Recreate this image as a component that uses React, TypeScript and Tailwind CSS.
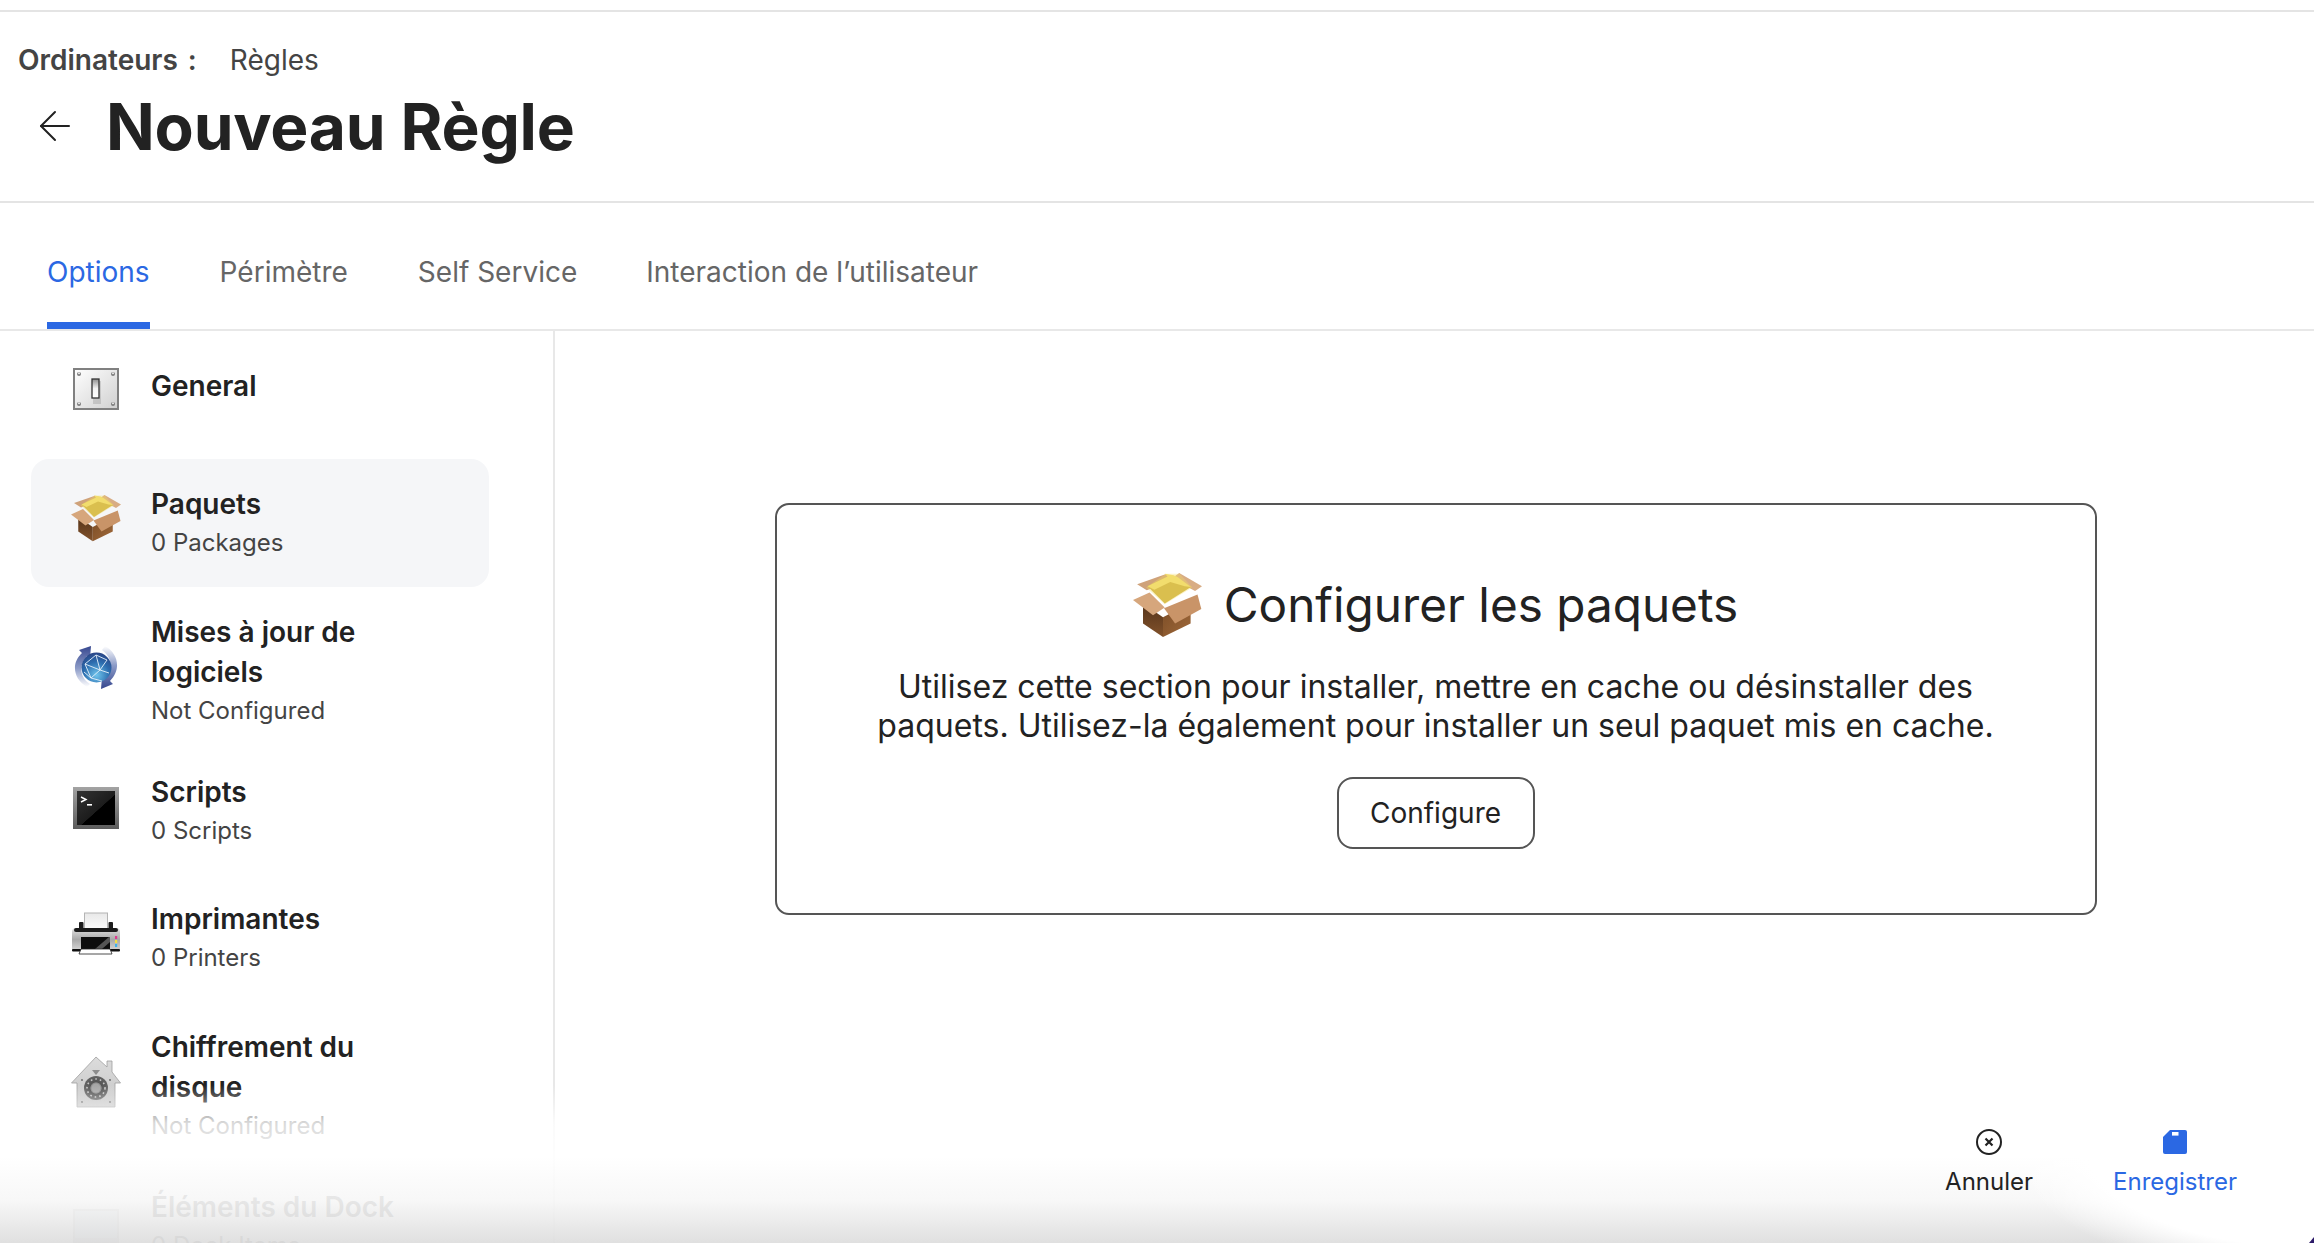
import React from "react";
import { ArrowLeft } from "lucide-react";

function SwitchIcon() {
  return (
    <svg viewBox="0 0 48 48" className="w-12 h-12">
      <defs>
        <linearGradient id="plate" x1="0" y1="0" x2="1" y2="1">
          <stop offset="0" stopColor="#ffffff" />
          <stop offset="1" stopColor="#d0d0d0" />
        </linearGradient>
        <linearGradient id="tog" x1="0" y1="0" x2="0" y2="1">
          <stop offset="0" stopColor="#8f8f8f" />
          <stop offset="0.5" stopColor="#f4f4f4" />
          <stop offset="1" stopColor="#ffffff" />
        </linearGradient>
      </defs>
      <rect x="2" y="3" width="44" height="40" fill="url(#plate)" stroke="#808080" strokeWidth="2" />
      <rect x="21" y="15" width="8" height="23" fill="#000" opacity=".12" />
      <rect x="20" y="13" width="7" height="19" fill="url(#tog)" stroke="#333" strokeWidth="1.3" />
      {[[7, 8], [41, 8], [7, 38], [41, 38]].map(([x, y]) => (
        <g key={x + "-" + y}>
          <circle cx={x} cy={y} r="2" fill="#7c7c7c" />
          <circle cx={x} cy={y - 0.7} r="1" fill="#eee" />
        </g>
      ))}
    </svg>
  );
}

function PackageIcon({ id, className }: { id: string; className: string }) {
  return (
    <svg viewBox="0 0 200 185" className={className}>
      <defs>
        <linearGradient id={id + "l"} x1="0" y1="0" x2="0" y2="1">
          <stop offset="0" stopColor="#54331a" />
          <stop offset="1" stopColor="#82522b" />
        </linearGradient>
        <linearGradient id={id + "r"} x1="0" y1="0" x2="1" y2="1">
          <stop offset="0" stopColor="#7a4c26" />
          <stop offset="1" stopColor="#a0693a" />
        </linearGradient>
      </defs>
      <polygon points="12,32 96,3 112,22 40,50" fill="#cfa27a" />
      <polygon points="134,0 200,38 180,52 112,16" fill="#d8ac84" />
      <polygon points="42,38 108,6 168,40 92,88" fill="#cdb044" />
      <polygon points="42,38 100,10 92,2 118,6 130,12 168,40 150,38 108,26 62,48" fill="#f1dd74" />
      <polygon points="38,42 95,2 135,2 172,42 92,90" fill="#f3dd60" opacity=".35" />
      <polygon points="29,88 87,128 87,185 29,146" fill={`url(#${id}l)`} />
      <polygon points="87,128 167,86 167,146 87,185" fill={`url(#${id}r)`} />
      <polygon points="0,78 48,56 92,100 58,122" fill="#d6a67c" />
      <polygon points="90,102 187,62 198,104 122,146" fill="#c99468" />
    </svg>
  );
}

function GlobeIcon() {
  return (
    <svg viewBox="0 0 48 48" className="w-12 h-12">
      <defs>
        <radialGradient id="glb" cx="0.5" cy="0.75" r="0.8">
          <stop offset="0" stopColor="#6fc4ec" />
          <stop offset="0.55" stopColor="#2c6cae" />
          <stop offset="1" stopColor="#2a3f80" />
        </radialGradient>
        <linearGradient id="arA" x1="0.6" y1="0" x2="0.6" y2="1">
          <stop offset="0" stopColor="#36478f" />
          <stop offset="0.55" stopColor="#8d9cc8" />
          <stop offset="1" stopColor="#ffffff" />
        </linearGradient>
        <linearGradient id="arB" x1="0.4" y1="1" x2="0.4" y2="0">
          <stop offset="0" stopColor="#36478f" />
          <stop offset="0.55" stopColor="#8d9cc8" />
          <stop offset="1" stopColor="#ffffff" />
        </linearGradient>
      </defs>
      <path d="M15 44 C1 36 -1 20 10 10 L7 7 L19 3 L18 15 L15 13 C7 21 7 34 18 41 Z" fill="url(#arA)" />
      <path d="M33 3 C47 11 49 27 38 38 L41 41 L29 46 L30 34 L33 36 C41 28 41 15 30 7 Z" fill="url(#arB)" />
      <circle cx="24.5" cy="24.5" r="15" fill="url(#glb)" />
      <path d="M13 21 L24 12 L35 17 L28 27 L19 35 M24 12 L28 27 L37 30 M13 21 L19 35 L30 38 M19 35 L12 29 M13 21 L28 27" stroke="#e6f2fb" strokeWidth="0.9" fill="none" />
    </svg>
  );
}

function TerminalIcon() {
  return (
    <svg viewBox="0 0 48 48" className="w-12 h-12">
      <defs>
        <linearGradient id="fr" x1="0" y1="0" x2="0" y2="1">
          <stop offset="0" stopColor="#a3a3a3" />
          <stop offset="1" stopColor="#5c5c5c" />
        </linearGradient>
        <linearGradient id="sc" x1="0" y1="0" x2="1" y2="1">
          <stop offset="0" stopColor="#333" />
          <stop offset="0.55" stopColor="#1c1c1c" />
          <stop offset="0.56" stopColor="#000" />
          <stop offset="1" stopColor="#000" />
        </linearGradient>
      </defs>
      <rect x="1" y="3" width="46" height="42" fill="url(#fr)" />
      <rect x="5" y="7" width="38" height="34" fill="url(#sc)" />
      <path d="M9 13 L14 15.5 L9 18" stroke="#fff" strokeWidth="1.4" fill="none" />
      <rect x="15" y="20" width="5" height="1.6" fill="#fff" />
    </svg>
  );
}

function PrinterIcon() {
  return (
    <svg viewBox="0 0 50 48" className="w-[50px] h-12">
      <defs>
        <linearGradient id="pb" x1="0" y1="0" x2="0" y2="1">
          <stop offset="0" stopColor="#e0e0e0" />
          <stop offset="0.5" stopColor="#a8a8a8" />
          <stop offset="1" stopColor="#d8d8d8" />
        </linearGradient>
        <linearGradient id="pa" x1="0" y1="0" x2="0" y2="1">
          <stop offset="0" stopColor="#e8e8e8" />
          <stop offset="1" stopColor="#ffffff" />
        </linearGradient>
      </defs>
      <rect x="13.5" y="1" width="23" height="19" fill="url(#pa)" stroke="#b4b4b4" />
      <rect x="8" y="10" width="4.5" height="10" rx="1" fill="#1c1c1c" />
      <rect x="37.5" y="10" width="4.5" height="10" rx="1" fill="#1c1c1c" />
      <path d="M1 20 Q1 16 5 16 L45 16 Q49 16 49 20 L49 39 L1 39 Z" fill="url(#pb)" />
      <rect x="3" y="16" width="44" height="4" rx="2" fill="#1a1a1a" />
      <rect x="1" y="37" width="48" height="2.5" rx="1" fill="#111" />
      <rect x="10" y="25" width="29" height="12" fill="#0d0d0d" />
      <polygon points="24,37 38,25 39,25 39,30 31,37" fill="#555" />
      <polygon points="10,37 39,37 41,42 8,42" fill="#fff" stroke="#222" strokeWidth=".8" />
      <rect x="44" y="24" width="2.2" height="3" fill="#e0398f" />
      <rect x="44" y="28" width="2.2" height="3" fill="#f2e042" />
      <rect x="44" y="32" width="2.2" height="3" fill="#3fb2e8" />
    </svg>
  );
}

function VaultIcon() {
  return (
    <svg viewBox="0 0 50 52" className="w-[50px] h-[52px]">
      <defs>
        <linearGradient id="hs" x1="0" y1="0" x2="0" y2="1">
          <stop offset="0" stopColor="#dcdcdc" />
          <stop offset="1" stopColor="#c6c6c6" />
        </linearGradient>
        <radialGradient id="dl" cx="0.5" cy="0.5" r="0.55">
          <stop offset="0" stopColor="#b0b0b0" />
          <stop offset="0.4" stopColor="#8a8a8a" />
          <stop offset="0.45" stopColor="#555" />
          <stop offset="1" stopColor="#666" />
        </radialGradient>
      </defs>
      <path d="M25 1 L36 11 L36 5 L41 5 L41 16 L49.5 27 L44 27 L44 51 L6 51 L6 27 L0.5 27 Z" fill="url(#hs)" stroke="#a0a0a0" strokeWidth=".8" />
      <polygon points="21,14 29,14 25,19" fill="#8c8c8c" />
      <circle cx="25" cy="32" r="12" fill="url(#dl)" />
      <circle cx="25" cy="32" r="9" fill="none" stroke="#c8c8c8" strokeWidth="1.6" strokeDasharray="1.6 3" />
      <circle cx="25" cy="32" r="4.5" fill="#a6a6a6" />
      <circle cx="11" cy="24" r=".9" fill="#666" />
      <circle cx="39" cy="24" r=".9" fill="#666" />
      <circle cx="11" cy="46" r=".9" fill="#666" />
      <circle cx="39" cy="46" r=".9" fill="#666" />
    </svg>
  );
}

function DockIcon() {
  return (
    <svg viewBox="0 0 48 48" className="w-12 h-12">
      <rect x="2" y="4" width="44" height="32" fill="#cfdde8" stroke="#b4b4b4" strokeWidth="2" />
      <rect x="2" y="32" width="44" height="4" fill="#b9c0c6" />
      <rect x="18" y="38" width="12" height="4" fill="#b4b4b4" />
    </svg>
  );
}

type Item = {
  title: string[];
  sub?: string;
  icon: React.ReactNode;
  box: string;
  iconBox: string;
  text: string;
};

const items: Item[] = [
  { title: ["General"], icon: <SwitchIcon />, box: "h-[128px]", iconBox: "-mt-[10px]", text: "pt-[35px]" },
  {
    title: ["Paquets"],
    sub: "0 Packages",
    icon: <PackageIcon id="pk1" className="w-[50px] h-[48px]" />,
    box: "h-[128px] bg-[#f5f6f8] rounded-[18px]",
    iconBox: "-mt-[10px]",
    text: "pt-[25px]",
  },
  { title: ["Mises à jour de", "logiciels"], sub: "Not Configured", icon: <GlobeIcon />, box: "h-[160px]", iconBox: "mt-0", text: "pt-[25px]" },
  { title: ["Scripts"], sub: "0 Scripts", icon: <TerminalIcon />, box: "h-[127px]", iconBox: "-mt-[6px]", text: "pt-[25px]" },
  { title: ["Imprimantes"], sub: "0 Printers", icon: <PrinterIcon />, box: "h-[128px]", iconBox: "-mt-[4px]", text: "pt-[25px]" },
  { title: ["Chiffrement du", "disque"], sub: "Not Configured", icon: <VaultIcon />, box: "h-[160px]", iconBox: "mt-0", text: "pt-[25px]" },
  { title: ["Éléments du Dock"], sub: "0 Dock Items", icon: <DockIcon />, box: "h-[127px]", iconBox: "mt-[8px]", text: "pt-[25px]" },
];

export default function App() {
  return (
    <div className="relative h-[1243px] w-full overflow-hidden bg-white pt-[10px] font-['Inter',sans-serif] text-[#222222]">
      <header className="h-[193px] border-t-2 border-b-2 border-[#e4e4e4] pl-[18px]">
        <div className="flex h-[68px] items-end text-[28px] leading-[40px] text-[#444444]">
          <span className="font-semibold">Ordinateurs</span>
          <span className="ml-[10px] font-semibold">:</span>
          <span className="ml-[33px]">Règles</span>
        </div>
        <div className="mt-[9px] flex items-center pl-[21px]">
          <ArrowLeft size={48} strokeWidth={1} className="-ml-[8px] -mt-[3px] text-[#222222]" />
          <h1 className="ml-[27px] text-[64px] font-bold leading-[76px] tracking-[-0.2px]">Nouveau Règle</h1>
        </div>
      </header>

      <nav className="flex h-[128px] gap-[70px] border-b-2 border-[#e8e8e8] pl-[47px] text-[28px] leading-[40px] text-[#666666]">
        <div className="flex h-[126px] flex-col justify-between border-b-[7px] border-[#2b68e3] pt-[49px] text-[#2b68e3]">Options</div>
        <div className="pt-[49px]">Périmètre</div>
        <div className="pt-[49px]">Self Service</div>
        <div className="-ml-[1px] pt-[49px]">Interaction de l’utilisateur</div>
      </nav>

      <div className="flex h-[920px]">
        <aside className="w-[555px] shrink-0 border-r-2 border-[#e8e8e8] pl-[31px]">
          {items.map((it) => (
            <div key={it.title[0]} className={`flex w-[458px] items-center pl-[40px] ${it.box}`}>
              <div className={`flex w-[50px] shrink-0 justify-center ${it.iconBox}`}>{it.icon}</div>
              <div className={`ml-[30px] self-start ${it.text}`}>
                {it.title.map((t) => (
                  <div key={t} className="text-[28px] font-semibold leading-[40px] text-[#222222]">
                    {t}
                  </div>
                ))}
                {it.sub && <div className="text-[24px] leading-[38px] text-[#444444]">{it.sub}</div>}
              </div>
            </div>
          ))}
        </aside>

        <main className="flex flex-1 items-start justify-center pl-[2px] pt-[172px]">
          <section className="flex h-[412px] w-[1322px] flex-col items-center rounded-[14px] border-2 border-[#555555] pt-[68px]">
            <div className="flex items-center">
              <PackageIcon id="pk2" className="w-[69px] h-[64px]" />
              <h2 className="ml-[22px] text-[47.7px] font-normal leading-[64px]">Configurer les paquets</h2>
            </div>
            <p className="mt-[30px] w-[1180px] text-center text-[32px] leading-[39px] text-[#222222]">
              Utilisez cette section pour installer, mettre en cache ou désinstaller des
              <br />
              paquets. Utilisez-la également pour installer un seul paquet mis en cache.
            </p>
            <button className="mt-[32px] flex h-[72px] w-[198px] items-center justify-center rounded-[16px] border-2 border-[#555555] text-[28px] text-[#222222]">
              Configure
            </button>
          </section>
        </main>
      </div>

      <div className="pointer-events-none absolute inset-x-0 bottom-0 h-[158px] bg-[linear-gradient(to_bottom,rgba(255,255,255,0)_0px,rgba(255,255,255,0.8)_38px,rgba(255,255,255,0.92)_72px,rgba(247,247,247,0.92)_115px,rgba(222,222,222,0.95)_158px)]" />
      <div className="pointer-events-none absolute bottom-0 right-0 h-[173px] w-[400px] bg-[radial-gradient(ellipse_300px_130px_at_100%_80px,#ffffff_75%,rgba(255,255,255,0)_100%)]" />

      <div className="absolute bottom-[43px] right-[77px] flex items-end gap-[80px] text-[24px] leading-[36px]">
        <div className="flex flex-col items-center">
          <svg viewBox="0 0 26 26" className="mb-[9px] h-[26px] w-[26px]" fill="none" stroke="#222222">
            <circle cx="13" cy="13" r="12" strokeWidth="2" />
            <path d="M9.5 9.5 L16.5 16.5 M16.5 9.5 L9.5 16.5" strokeWidth="2.2" />
          </svg>
          <span>Annuler</span>
        </div>
        <div className="flex flex-col items-center text-[#2b68e3]">
          <svg viewBox="0 0 24 24" className="mb-[9px] h-[26px] w-[24px]">
            <path d="M7 0 H22 a2 2 0 0 1 2 2 V22 a2 2 0 0 1 -2 2 H2 a2 2 0 0 1 -2 -2 V7 Z" fill="#2b68e3" />
            <rect x="9" y="2" width="6.5" height="3.6" fill="#ffffff" />
          </svg>
          <span>Enregistrer</span>
        </div>
      </div>

      <svg viewBox="0 0 5 6" className="absolute bottom-0 right-0 h-[6px] w-[5px]">
        <polygon points="5,0 5,6 0,6" fill="#2d1b69" />
      </svg>
    </div>
  );
}
